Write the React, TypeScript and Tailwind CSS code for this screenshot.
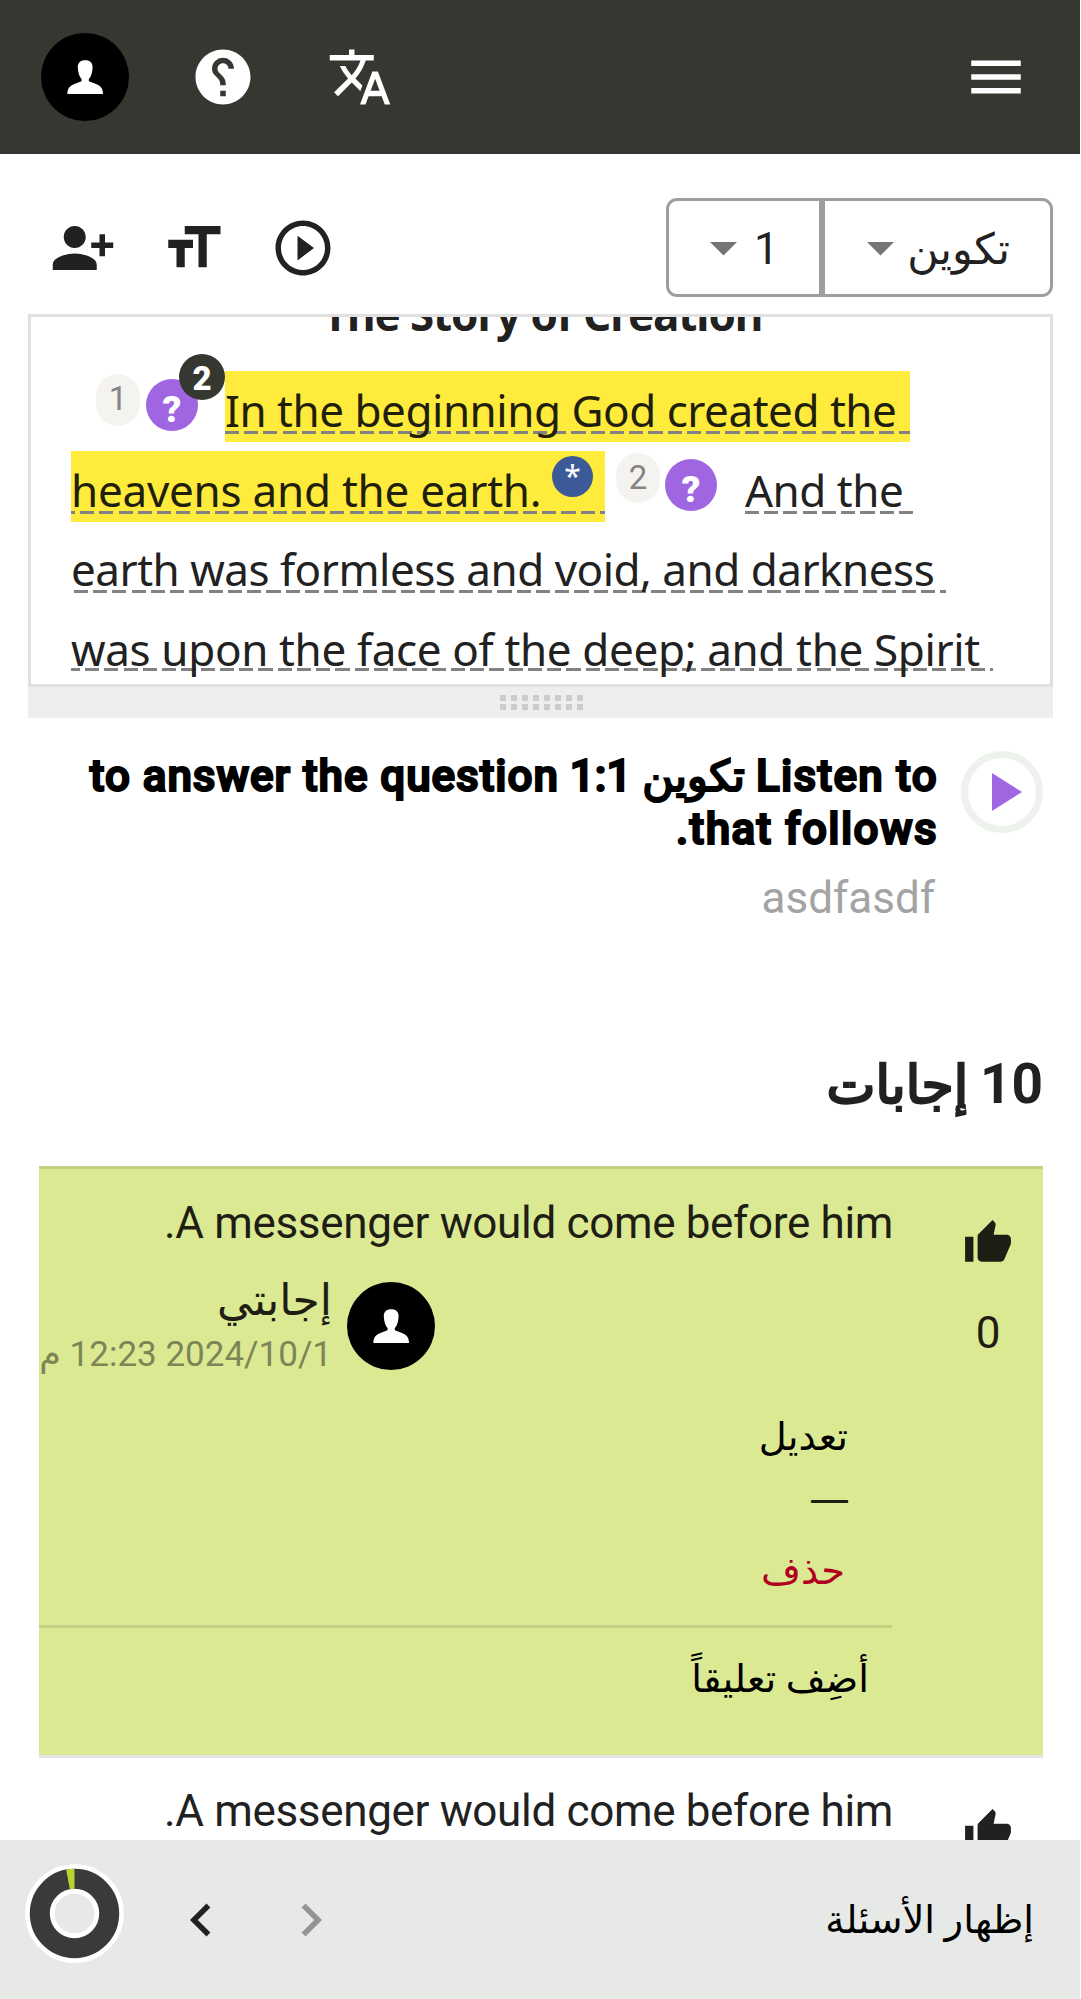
import React from "react";

const SANS = "font-['Roboto','DejaVu_Sans',sans-serif]";

function Icon({ d, size = "size-[66px]", flip = false }: { d: string; size?: string; flip?: boolean }) {
  return (
    <svg viewBox="0 0 24 24" fill="currentColor" className={`${size} shrink-0 ${flip ? "-scale-x-100" : ""}`}>
      <path d={d} />
    </svg>
  );
}

const HELP =
  "M12 2C6.48 2 2 6.48 2 12s4.48 10 10 10 10-4.48 10-10S17.52 2 12 2zm1 17h-2v-2h2v2zm2.07-7.75-.9.92C13.45 12.9 13 13.5 13 15h-2v-.5c0-1.1.45-2.1 1.17-2.83l1.24-1.26c.37-.36.59-.86.59-1.41 0-1.1-.9-2-2-2s-2 .9-2 2H8c0-2.21 1.79-4 4-4s4 1.79 4 4c0 .88-.36 1.68-.93 2.25z";
const TRANSLATE =
  "m12.87 15.07-2.54-2.51.03-.03c1.74-1.94 2.98-4.17 3.71-6.53H17V4h-7V2H8v2H1v1.99h11.17C11.5 7.92 10.44 9.75 9 11.35 8.07 10.32 7.3 9.19 6.69 8h-2c.73 1.63 1.73 3.17 2.98 4.56l-5.09 5.02L4 19l5-5 3.11 3.11.76-2.04zM18.5 10h-2L12 22h2l1.12-3h4.75L21 22h2l-4.5-12zm-2.62 7 1.62-4.33L19.12 17h-3.24z";
const MENU = "M3 18h18v-2H3v2zm0-5h18v-2H3v2zm0-7v2h18V6H3z";
const PERSON_ADD =
  "M15 12c2.21 0 4-1.79 4-4s-1.79-4-4-4-4 1.79-4 4 1.79 4 4 4zm-9-2V7H4v3H1v2h3v3h2v-3h3v-2H6zm9 4c-2.67 0-8 1.34-8 4v2h16v-2c0-2.66-5.33-4-8-4z";
const FORMAT_SIZE = "M9 4v3h5v12h3V7h5V4H9zm-6 8h3v7h3v-7h3V9H3v3z";
const PLAY_OUTLINE =
  "m10 16.5 6-4.5-6-4.5v9zM12 2C6.48 2 2 6.48 2 12s4.48 10 10 10 10-4.48 10-10S17.52 2 12 2zm0 18c-4.41 0-8-3.59-8-8s3.59-8 8-8 8 3.59 8 8-3.59 8-8 8z";
const THUMB_UP =
  "M1 21h4V9H1v12zm22-11c0-1.1-.9-2-2-2h-6.31l.95-4.57.03-.32c0-.41-.17-.79-.44-1.06L14.17 1 7.59 7.59C7.22 7.95 7 8.45 7 9v10c0 1.1.9 2 2 2h9c.83 0 1.54-.5 1.84-1.22l3.02-7.05c.09-.23.14-.47.14-.73v-2z";
const CHEVRON_LEFT = "M15.41 7.41 14 6l-6 6 6 6 1.41-1.41L10.83 12z";
const CHEVRON_RIGHT = "M10 6 8.59 7.41 13.17 12l-4.58 4.59L10 18l6-6z";

function Avatar() {
  return (
    <svg viewBox="0 0 88 88" className="size-[88px] shrink-0">
      <circle cx="44" cy="44" r="44" fill="#000" />
      <path
        fill="#fff"
        d="M44.2 27.3c4.9 0 7.6 2.6 7.4 7.2-.2 5-1.5 8.9-3.8 11.8v1.6c1.2 1.1 3.6 1.5 7.2 3 4.500 1.900 7 3.900 7 10.100H26.400c0-6.200 2.500-8.200 7-10.100 3.600-1.500 6-1.900 7.200-3v-1.600c-2.300-2.900-3.600-6.800-3.800-11.800-.2-4.600 2.500-7.200 7.400-7.200z"
      />
    </svg>
  );
}

function Arrow() {
  return (
    <svg viewBox="0 0 27 14" className="mt-[3px] h-[14px] w-[27px] shrink-0 fill-[#757575]">
      <path d="M0 0h27L13.500 13.500z" />
    </svg>
  );
}

const DASHES =
  "h-[71px] leading-[78px] whitespace-pre bg-no-repeat bg-[image:repeating-linear-gradient(90deg,#828282_0_14px,transparent_14px_19.25px)] bg-[length:200%_3px]";

function VerseNumber({ n, className }: { n: number; className: string }) {
  return (
    <span
      className={`${SANS} flex w-[44px] shrink-0 justify-center rounded-[22px] bg-[#f4f3ef] text-[33px] text-[#858585] ${className}`}
    >
      {n}
    </span>
  );
}

function QuestionMark({ className, count }: { className: string; count?: number }) {
  return (
    <span
      className={`${SANS} relative flex size-[52px] shrink-0 justify-center rounded-full bg-[#a066e2] text-[37px] leading-[61px] font-black text-white ${className}`}
    >
      ?
      {count && (
        <span className="absolute -top-[25px] left-[33px] size-[46px] rounded-full bg-[#353831] text-center text-[33px] leading-[50px]">
          {count}
        </span>
      )}
    </span>
  );
}

function AnswerVotes({ votes }: { votes: number }) {
  return (
    <div className="flex w-[110px] shrink-0 flex-col items-center pt-[49px]">
      <Icon d={THUMB_UP} size="size-[50px]" />
      <span className="mt-[39px] text-[44px] leading-[53px]">{votes}</span>
    </div>
  );
}

export default function App() {
  return (
    <div className={`${SANS} flex h-[1999px] w-[1081px] flex-col overflow-hidden bg-white text-[#212121]`}>
      <header className="flex h-[154px] w-[1080px] shrink-0 items-center bg-[#353831] pr-[51px] pl-[41px] text-white">
        <Avatar />
        <span className="ml-[61px] flex">
          <Icon d={HELP} flip />
        </span>
        <span className="ml-[71px] flex">
          <Icon d={TRANSLATE} />
        </span>
        <span className="ml-auto flex">
          <Icon d={MENU} />
        </span>
      </header>

      <div className="flex h-[160px] shrink-0 items-start pt-[44px] pr-[28px] pl-[50px]">
        <div className="flex h-[99px] items-center gap-[44px]">
          <Icon d={PERSON_ADD} flip />
          <Icon d={FORMAT_SIZE} />
          <Icon d={PLAY_OUTLINE} />
        </div>
        <div className="ml-auto flex h-[99px] text-[44px] leading-[53px]">
          <div className="flex w-[156px] items-center rounded-l-[11px] border-[3px] border-[#9e9e9e] pl-[41px]">
            <Arrow />
            <span className="mt-[4px] ml-[17px]">1</span>
          </div>
          <div
            dir="rtl"
            className="flex w-[231px] items-center justify-between rounded-r-[11px] border-[3px] border-[#9e9e9e] pr-[40px] pl-[42px]"
          >
            <span className="mt-[4px] text-[43px]">تكوين</span>
            <Arrow />
          </div>
        </div>
      </div>

      <section className="mx-[28px] h-[373px] shrink-0 overflow-hidden border-[3px] border-[#e0e0e0] font-['Noto_Sans',sans-serif] text-[44px]">
        <h2 className="-mt-[33px] h-[60px] pl-[4px] text-center leading-[60px] font-bold tracking-[-1.1px]">
          The Story of Creation
        </h2>
        <div className="mt-[27px] flex h-[80px] pl-[65px]">
          <VerseNumber n={1} className="mt-[3px] h-[52px] leading-[49px]" />
          <QuestionMark className="mt-[8px] ml-[6px]" count={2} />
          <span
            className={`${DASHES} ml-[27px] w-[685px] bg-[#ffeb3b] bg-[position:0_60px] tracking-[-0.48px] text-[#1f1f0c]`}
          >
            In the beginning God created the{" "}
          </span>
        </div>
        <div className="flex h-[79px] pl-[40px]">
          <span
            className={`${DASHES} flex w-[534px] bg-[#ffeb3b] bg-[position:-10px_60px] tracking-[-0.25px] text-[#1f1f0c]`}
          >
            heavens and the earth.
            <sup className="top-0 mt-[5px] mr-[12px] ml-auto size-[41px] rounded-full bg-[#3d5a98] text-center text-[30px] leading-[40px] text-white">
              *
            </sup>
          </span>
          <VerseNumber n={2} className="mt-[2px] ml-[11px] h-[50px] leading-[50px]" />
          <QuestionMark className="mt-[8px] ml-[5px]" />
          <span className={`${DASHES} ml-[28px] w-[169px] bg-[position:0_60px] tracking-[-0.5px]`}>And the </span>
        </div>
        <div className="flex h-[80px] pl-[40px]">
          <span className={`${DASHES} w-[875px] bg-[position:3px_60px] tracking-[-0.5px]`}>
            earth was formless and void, and darkness{" "}
          </span>
        </div>
        <div className="flex h-[80px] pl-[40px]">
          <span className={`${DASHES} w-[922px] bg-[position:-5px_58px] tracking-[-0.36px]`}>
            was upon the face of the deep; and the Spirit{" "}
          </span>
        </div>
      </section>

      <div className="mx-[28px] flex h-[31px] shrink-0 items-center justify-center bg-[#eeeeee] pl-[2px]">
        <div className="grid grid-cols-8 gap-x-[5px] gap-y-[3px]">
          {Array.from({ length: 16 }, (_, i) => (
            <i key={i} className="size-[6px] bg-[#cccccc]" />
          ))}
        </div>
      </div>

      <main dir="rtl" className="h-[1122px] shrink-0 overflow-hidden pr-[38px] pl-[39px]">
        <div className="flex h-[333px] items-start">
          <button className="mt-[33px] flex size-[82px] shrink-0 items-center justify-center rounded-full border-[7px] border-[#eef2ec]">
            <svg viewBox="0 0 30 38" className="mr-[-3px] ml-[7px] h-[38px] w-[30px] fill-[#a066e2]">
              <path d="M0 0v38l30-19z" />
            </svg>
          </button>
          <div className="mt-[32px] mr-[23px] w-[880px] whitespace-nowrap">
            <h1 className="text-[44px] leading-[53px] font-medium text-black [-webkit-text-stroke:2.2px_#000]">
              <span className="tracking-[1.3px]">Listen to</span>{" "}
              <span className="text-[43px] font-normal">تكوين</span> 1:1{" "}
              <span className="tracking-[0.95px]">to answer the question</span>
              <br />
              <span className="tracking-[1.4px]">that follows.</span>
            </h1>
            <p className="mt-[16px] mr-[3px] text-[44px] leading-[53px] text-[#a3a3a3]">asdfasdf</p>
          </div>
        </div>

        <h2 className="h-[66px] text-[55px] leading-[66px] font-bold">
          10 <span className="-mr-[2px] text-[52px] font-normal [-webkit-text-stroke:2.4px_#212121]">إجابات</span>
        </h2>

        <article className="mt-[49px] flex h-[589px] border-t-[3px] border-[#c4d184] bg-[#dbe993] text-[#1e1e14]">
          <AnswerVotes votes={0} />
          <div className="mr-[41px] flex grow flex-col">
            <p className="mt-[28px] -mr-[1px] text-[44px] leading-[53px] tracking-[-0.34px] whitespace-nowrap">
              A messenger would come before him.
            </p>
            <div className="mt-[32px] flex h-[88px] justify-end">
              <Avatar />
              <div className="-mt-[8px] mr-[15px] w-[293px] whitespace-nowrap">
                <div className="text-[44px] leading-[52px]">إجابتي</div>
                <div className="mt-[7px] text-[35px] leading-[44px] tracking-[-1.4px] text-[#7d8556]">
                  2024/10/1 12:23 م
                </div>
              </div>
            </div>
            <button className="mt-[44px] pr-[44px] text-right text-[38.5px] leading-[46px] text-black">تعديل</button>
            <span className="mt-[16px] pr-[42px] font-['DejaVu_Sans'] text-[41px] leading-[46px]">—</span>
            <button className="mt-[26px] pr-[47px] text-right text-[38.5px] leading-[46px] text-[#b00020]">حذف</button>
            <hr className="mt-[31px] h-[3px] border-0 bg-[#c4d184]" />
            <button className="mt-[28px] pr-[23px] text-right text-[38.5px] leading-[46px] text-black">
              أضِف تعليقاً
            </button>
          </div>
        </article>
        <article className="flex h-[589px] border-t-[3px] border-[#e3e5e2]">
          <AnswerVotes votes={0} />
          <p className="mt-[27px] mr-[40px] text-[44px] leading-[53px] tracking-[-0.34px] whitespace-nowrap">
            A messenger would come before him.
          </p>
        </article>
      </main>

      <footer className="flex h-[159px] w-[1080px] shrink-0 items-start bg-[#e7e9e6] pr-[46px] pl-[25px]">
        <svg viewBox="0 0 99 99" className="mt-[24px] size-[99px] shrink-0">
          <circle cx="49.500" cy="49.500" r="34.600" fill="none" stroke="#fff" strokeWidth="29.500" />
          <circle cx="49.500" cy="49.500" r="34.700" fill="none" stroke="#3a3a3a" strokeWidth="20" />
          <circle
            cx="49.500"
            cy="49.500"
            r="34.700"
            fill="none"
            stroke="#b8d432"
            strokeWidth="20"
            pathLength={100}
            strokeDasharray="3 97"
            transform="rotate(-100.8 49.500 49.500)"
          />
        </svg>
        <span className="mt-[47px] ml-[44px] flex text-[#212121]">
          <Icon d={CHEVRON_LEFT} />
        </span>
        <span className="mt-[47px] ml-[44px] flex text-[#939493]">
          <Icon d={CHEVRON_RIGHT} />
        </span>
        <button dir="rtl" className="mt-[57px] ml-auto text-[38.5px] leading-[46px] text-black">
          إظهار الأسئلة
        </button>
      </footer>
    </div>
  );
}
